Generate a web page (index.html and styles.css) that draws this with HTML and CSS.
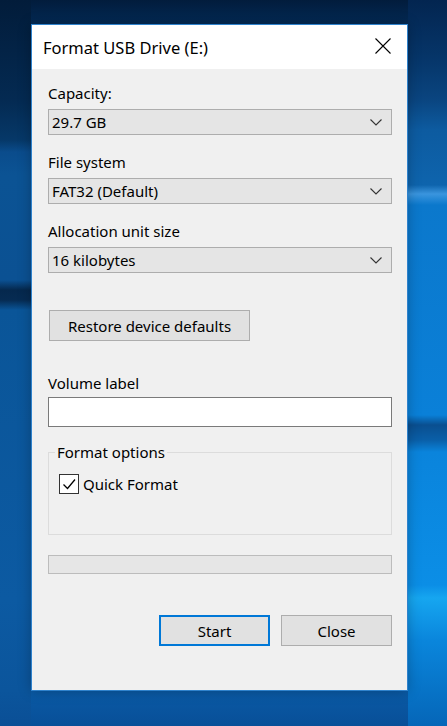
FILE: index.html
```html
<!DOCTYPE html>
<html lang="en">
<head>
    <meta charset="UTF-8">
    <meta name="viewport" content="width=device-width, initial-scale=1.0">
    <title>Format USB Drive (E:)</title>
    <link rel="stylesheet" href="styles.css">
</head>
<body>
    <div class="dialog">
        <div class="titlebar">
            <span class="title">Format USB Drive (E:)</span>
            <svg class="close-x" width="16" height="16" viewBox="0 0 16 16">
                <path d="M0.5 0.5 L15.5 15.5 M15.5 0.5 L0.5 15.5" stroke="#000" stroke-width="1.1" fill="none"/>
            </svg>
        </div>
        <div class="dialog-body">
            <div class="field-label first">Capacity:</div>
            <div class="combo">
                <span>29.7 GB</span>
                <svg class="chevron" width="12" height="7" viewBox="0 0 12 7"><path d="M0.5 0.5 L6 6 L11.5 0.5" stroke="#333" stroke-width="1.1" fill="none"/></svg>
            </div>

            <div class="field-label">File system</div>
            <div class="combo">
                <span>FAT32 (Default)</span>
                <svg class="chevron" width="12" height="7" viewBox="0 0 12 7"><path d="M0.5 0.5 L6 6 L11.5 0.5" stroke="#333" stroke-width="1.1" fill="none"/></svg>
            </div>

            <div class="field-label">Allocation unit size</div>
            <div class="combo">
                <span>16 kilobytes</span>
                <svg class="chevron" width="12" height="7" viewBox="0 0 12 7"><path d="M0.5 0.5 L6 6 L11.5 0.5" stroke="#333" stroke-width="1.1" fill="none"/></svg>
            </div>

            <button class="btn restore">Restore device defaults</button>

            <div class="field-label volume">Volume label</div>
            <input class="textbox" type="text">

            <fieldset class="group">
                <legend>Format options</legend>
                <label class="check">
                    <span class="check-box">
                        <svg width="18" height="18" viewBox="0 0 18 18"><path d="M3.5 9.5 L7.5 13.5 L15 4.5" stroke="#000" stroke-width="1.3" fill="none"/></svg>
                    </span>
                    Quick Format
                </label>
            </fieldset>

            <div class="progress"></div>

            <div class="actions">
                <button class="btn primary">Start</button>
                <button class="btn">Close</button>
            </div>
        </div>
    </div>
</body>
</html>
```

FILE: styles.css
```css
html, body {
    margin: 0;
    height: 100%;
}
body {
    width: 447px;
    height: 726px;
    overflow: hidden;
    padding: 24px 0 0 31px;
    box-sizing: border-box;
    font-family: "Noto Sans", "Open Sans", sans-serif;
    color: #000;
    background:
        linear-gradient(to bottom, #021c3a 0, #042a52 100px, #063868 140px, #0a4c8c 152px, #0b5394 175px, #0b5193 280px, #05284d 290px, #062b52 300px, #0a5598 310px, #0c5aa2 600px, #0b559c 690px, #0a4f96 726px) left top / 31px 100% no-repeat,
        linear-gradient(to bottom, #032550 0, #06366a 60px, #0a4580 100px, #0d5ba0 130px, #0e64ad 185px, #3a95de 194px, #0b78cc 205px, #0a80d8 415px, #0a4f90 425px, #0a5fa8 440px, #0a84dc 452px, #0b8ee6 585px, #16a6f0 598px, #0a86dc 640px, #0566b8 726px) right top / 39px 100% no-repeat,
        linear-gradient(to bottom, #021c3c 0, #032a55 24px, #0a5aa5 691px, #084f98 726px);
}

.dialog {
    width: 377px;
    height: 667px;
    box-sizing: border-box;
    border: 1px solid #2f82cc;
    background-color: #f0f0f0;
    display: flex;
    flex-direction: column;
    box-shadow: 0 0 12px rgba(0, 0, 0, 0.25);
}

.titlebar {
    height: 44px;
    background-color: #fff;
    display: flex;
    align-items: center;
    justify-content: space-between;
    padding: 0 16px 0 11px;
    flex-shrink: 0;
}
.title {
    font-size: 16.5px;
    margin-top: 1px;
}
.close-x {
    margin-top: -2px;
}

.dialog-body {
    display: flex;
    flex-direction: column;
    padding: 14px 15px 0 16px;
    font-size: 15px;
}

.field-label {
    line-height: 20px;
    margin-top: 17px;
    margin-bottom: 6px;
}
.field-label.first {
    margin-top: 0;
}
.field-label.volume {
    margin-top: 32px;
    margin-bottom: 4px;
}

.combo {
    height: 26px;
    box-sizing: border-box;
    border: 1px solid #adadad;
    background-color: #e5e5e5;
    display: flex;
    align-items: center;
    justify-content: space-between;
    padding: 0 9px 0 3px;
}
.chevron {
    margin-top: 1px;
}

.btn {
    font-family: inherit;
    font-size: 15px;
    color: #000;
    background-color: #e1e1e1;
    border: 1px solid #adadad;
    height: 31px;
    padding: 0;
    box-sizing: border-box;
}
.restore {
    width: 201px;
    margin: 37px 0 0 1px;
    align-self: flex-start;
}

.textbox {
    height: 30px;
    box-sizing: border-box;
    border: 1px solid #7a7a7a;
    background-color: #fff;
    margin: 0;
    outline: none;
}

.group {
    margin: 15px 0 0 0;
    padding: 0 10px 40px 10px;
    border: 1px solid #dcdcdc;
    min-width: 0;
}
.group legend {
    line-height: 20px;
    padding: 0 2px;
    margin-left: -4px;
}

.check {
    display: flex;
    align-items: center;
    height: 20px;
    margin-top: 12px;
    gap: 4px;
}
.check-box {
    width: 20px;
    height: 20px;
    box-sizing: border-box;
    border: 1px solid #333;
    background-color: #fff;
    display: flex;
}

.progress {
    height: 19px;
    box-sizing: border-box;
    border: 1px solid #bcbcbc;
    background-color: #e6e6e6;
    margin-top: 20px;
}

.actions {
    display: flex;
    justify-content: flex-end;
    gap: 11px;
    margin-top: 41px;
}
.actions .btn {
    width: 111px;
}
.btn.primary {
    border: 2px solid #0078d7;
}
```
